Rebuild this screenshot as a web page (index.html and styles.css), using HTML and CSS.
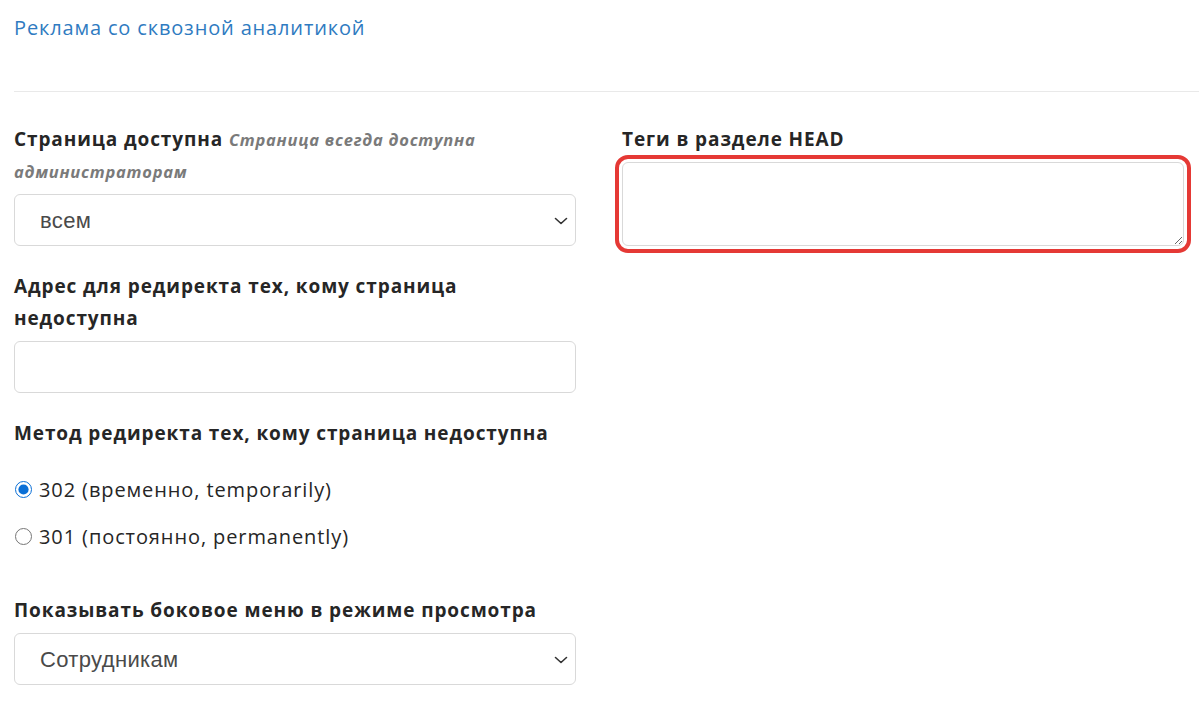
FILE: index.html
```html
<!DOCTYPE html>
<html lang="ru">
<head>
<meta charset="utf-8">
<link rel="stylesheet" href="styles.css">
</head>
<body>
<div class="page">
  <div class="top">
    <a class="link" href="#">Реклама со сквозной аналитикой</a>
  </div>
  <hr class="sep">
  <div class="cols">
    <div class="col">
      <div class="group">
        <label class="label">Страница доступна <span class="hint">Страница всегда доступна администраторам</span></label>
        <div class="select-wrap">
          <select class="control select"><option>всем</option></select>
          <svg class="chev" width="14" height="8" viewBox="0 0 14 8"><path d="M1.5 1.5 L7 6.5 L12.5 1.5" fill="none" stroke="#333" stroke-width="1.6" stroke-linecap="round" stroke-linejoin="round"/></svg>
        </div>
      </div>
      <div class="group">
        <label class="label">Адрес для редиректа тех, кому страница недоступна</label>
        <input class="control" type="text">
      </div>
      <div class="group radios">
        <label class="label">Метод редиректа тех, кому страница недоступна</label>
        <label class="radio"><input type="radio" name="m" checked> 302 (временно, temporarily)</label>
        <label class="radio"><input type="radio" name="m"> 301 (постоянно, permanently)</label>
      </div>
      <div class="group">
        <label class="label">Показывать боковое меню в режиме просмотра</label>
        <div class="select-wrap">
          <select class="control select"><option>Сотрудникам</option></select>
          <svg class="chev" width="14" height="8" viewBox="0 0 14 8"><path d="M1.5 1.5 L7 6.5 L12.5 1.5" fill="none" stroke="#333" stroke-width="1.6" stroke-linecap="round" stroke-linejoin="round"/></svg>
        </div>
      </div>
    </div>
    <div class="col">
      <div class="group">
        <label class="label">Теги в разделе HEAD</label>
        <textarea class="control area highlighted"></textarea>
      </div>
    </div>
  </div>
</div>
</body>
</html>
```

FILE: styles.css
```css
* { box-sizing: border-box; }
html, body { margin: 0; padding: 0; background: #fff; }
body {
  font-family: "Open Sans", "Noto Sans", sans-serif;
  color: #262626;
  overflow: hidden;
}
.page { padding: 0 0 0 14px; }
.top { height: 91px; padding-top: 13px; }
.link {
  color: #2f7bc1;
  text-decoration: none;
  font-size: 20px;
  letter-spacing: 0.85px;
  line-height: 30px;
}
.sep {
  margin: 0;
  border: 0;
  border-top: 1px solid #e9e9e9;
  height: 0;
}
.cols {
  display: grid;
  grid-template-columns: 562px 562px;
  column-gap: 46px;
  padding-top: 31px;
}
.group { margin-bottom: 24px; display: flex; flex-direction: column; }
.label {
  display: block;
  font-weight: 700;
  font-size: 19px;
  letter-spacing: 0.9px;
  line-height: 32px;
  color: #262626;
  margin-bottom: 7px;
}
.hint {
  font-style: italic;
  font-size: 16.5px;
  letter-spacing: 0.75px;
  line-height: 20px;
  color: #7a7a7a;
}
.control {
  width: 562px;
  height: 52px;
  border: 1px solid #d9d9d9;
  border-radius: 6px;
  background: #fff;
  font-family: "Liberation Sans", Arial, sans-serif;
  font-size: 22px;
  letter-spacing: 0.35px;
  color: #4a4a4a;
  padding: 0 25px;
  outline: none;
}
.select-wrap { position: relative; width: 562px; }
.select { appearance: none; -webkit-appearance: none; display: block; }
.chev { position: absolute; right: 8px; top: 23px; pointer-events: none; }
.area {
  height: 84px;
  resize: vertical;
  display: block;
}
.highlighted {
  outline: 4px solid #e53935;
  outline-offset: 3px;
}
.radios { margin-bottom: 34px; }
.radios .label { margin-bottom: 17px; }
.radio {
  display: flex;
  align-items: center;
  font-size: 20px;
  letter-spacing: 0.9px;
  line-height: 24px;
  color: #262626;
  height: 47px;
}
.radio input {
  margin: 0 7px 0 1px;
  width: 17px;
  height: 17px;
  accent-color: #0a6fd6;
}
```
